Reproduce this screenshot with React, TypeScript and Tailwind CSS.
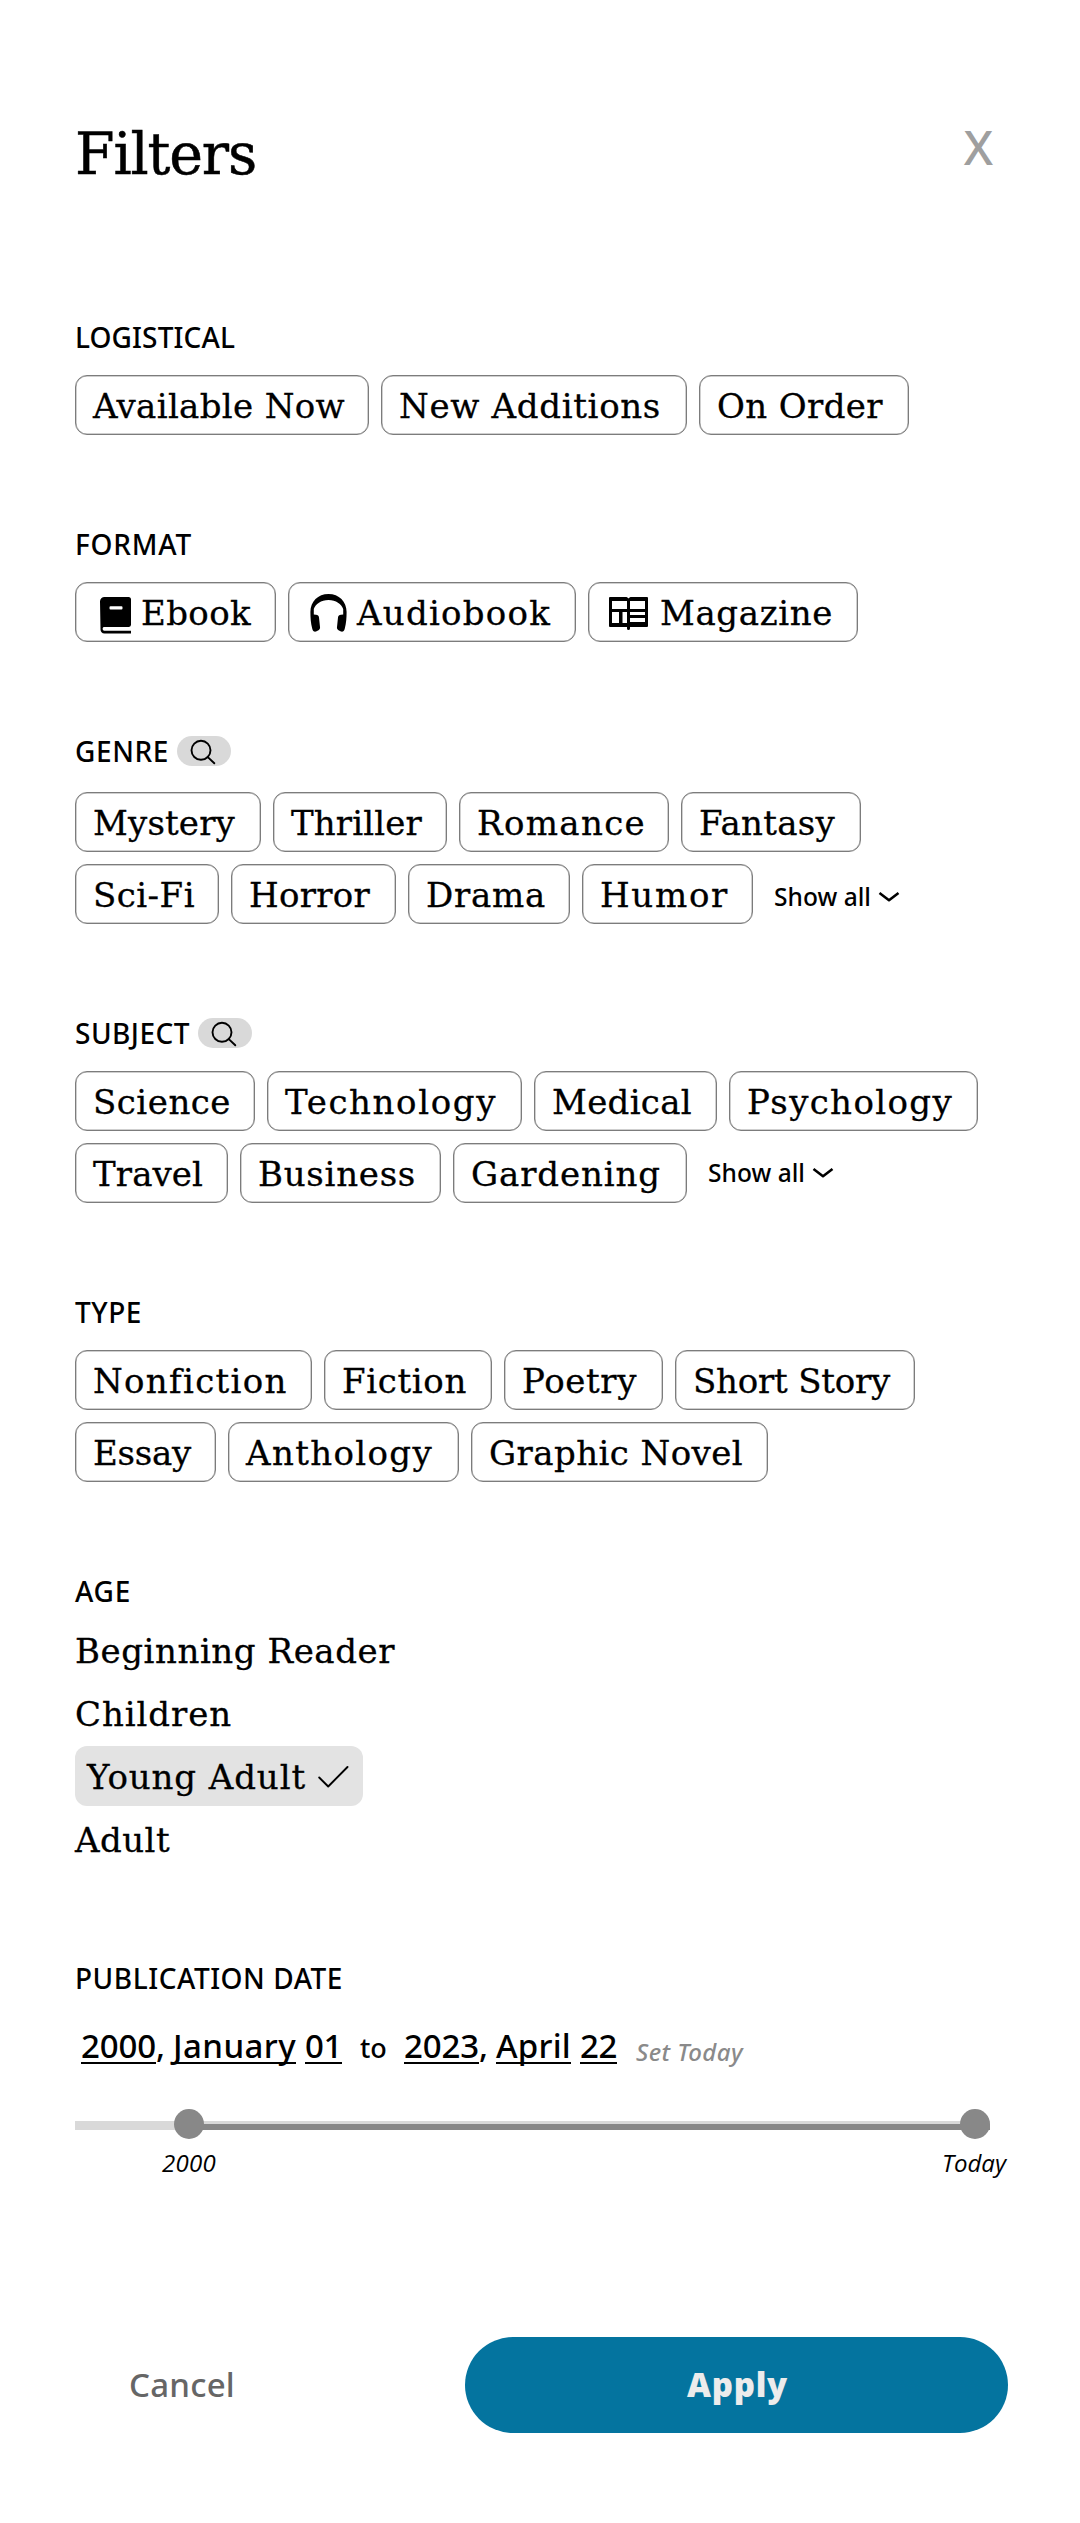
import { useLayoutEffect, useRef } from "react";
import type { ReactNode } from "react";

const SLAB = "font-['DejaVu_Serif',serif] [-webkit-text-stroke:0.3px_black]";

/* Single line of text whose tracking is adjusted so that it spans `width`. */
function Fit({ text, width, className = "" }: { text: string; width: number; className?: string }) {
  const ref = useRef<HTMLSpanElement>(null);
  useLayoutEffect(() => {
    const el = ref.current;
    if (!el) return;
    el.style.letterSpacing = "0px";
    const natural = el.getBoundingClientRect().width;
    const step = (width - natural) / text.length;
    el.style.letterSpacing = `${step}px`;
  }, [text, width]);
  return (
    <span ref={ref} className={`inline-block shrink-0 whitespace-pre ${className}`}>
      {text}
    </span>
  );
}

function Heading({ text, width, children }: { text: string; width: number; children?: ReactNode }) {
  return (
    <div className="flex h-10 items-center">
      <h2 className="text-[28px] leading-10 font-medium">
        <Fit text={text} width={width} />
      </h2>
      {children}
    </div>
  );
}

function SearchPill() {
  return (
    <button className="ml-2 h-[30px] w-[54px] rounded-full bg-[#d9d9d9]" aria-label="Search">
      <svg width="54" height="30" viewBox="0 0 54 30" fill="none" stroke="#000" strokeWidth="1.9" strokeLinecap="round">
        <circle cx="24" cy="14.3" r="9.5" />
        <path d="M30.8 21.1L37.3 27.3" />
      </svg>
    </button>
  );
}

type ChipData = { text: string; box: number; width: number; icon?: ReactNode };

function Chip({ text, box, width, icon }: ChipData) {
  return (
    <button
      className="flex h-[60px] shrink-0 items-center rounded-xl border border-[#7c7c7c] pl-[17px] text-[34px] shadow-[inset_0_0_0_0.5px_#a0a0a0]"
      style={{ width: box }}
    >
      {icon}
      <Fit text={text} width={width} className={`${SLAB} pt-0.5 leading-[56px]`} />
    </button>
  );
}

function Chips({ rows, more }: { rows: ChipData[][]; more?: ReactNode }) {
  return (
    <div className="flex flex-col gap-3">
      {rows.map((row, i) => (
        <div key={i} className="flex gap-3">
          {row.map((c) => (
            <Chip key={c.text} {...c} />
          ))}
          {i === rows.length - 1 && more}
        </div>
      ))}
    </div>
  );
}

function ShowAll({ className = "" }: { className?: string }) {
  return (
    <button className={`ml-[9px] flex h-[60px] items-center text-[24.5px] font-medium ${className}`}>
      <Fit text="Show all" width={97} className="leading-8" />
      <svg className="ml-[7px]" width="22" height="12" viewBox="0 0 22 12" fill="none" stroke="#000" strokeWidth="2.6" strokeLinejoin="round">
        <path d="M1.5 2L11 9.2L20.5 2" />
      </svg>
    </button>
  );
}

const BookIcon = (
  <svg className="mt-[7px] mr-[10px] ml-[7px]" width="31" height="37" viewBox="0 0 31 37">
    <path
      fillRule="evenodd"
      d="M4.5 0H28.5A2.5 2.5 0 0 1 31 2.5V27.5A2.5 2.5 0 0 1 29 30H3.8C2.2 30.5 2.2 33.6 4.2 33.8H31V36.5H4.5C2 36.5 .5 34.8 .5 32.5L0 4.5A4.5 4.5 0 0 1 4.5 0ZM10.5 9.2A1 1 0 0 0 9.5 10.2V11.5A1 1 0 0 0 10.5 12.5H21.5A1 1 0 0 0 22.5 11.5V10.2A1 1 0 0 0 21.5 9.2Z"
    />
  </svg>
);

const HeadphonesIcon = (
  <svg className="mt-[2px] mr-[10px] ml-1" width="37" height="38" viewBox="0 0 37 38">
    <path d="M18.5 0C29 0 36.6 7.5 36.6 18C36.6 24 36.2 29 34.8 34.5C34.2 37.2 32.8 38 31 37.6L28.5 36.2C27.2 35.4 26.8 34.3 27 33L28 23.5C28.2 21.8 29.3 20.8 31 20.8L33.2 20.4V15C31.5 10 26 6 18.5 6S5.5 10 3.8 15V20.4L6 20.8C7.7 20.8 8.8 21.8 9 23.5L10 33C10.2 34.3 9.8 35.4 8.5 36.2L6 37.6C4.2 38 2.8 37.2 2.2 34.5C.8 29 .4 24 .4 18C.4 7.5 8 0 18.5 0Z" />
  </svg>
);

const MagazineIcon = (
  <svg className="mt-[3px] mr-3 ml-[3px]" width="39" height="33" viewBox="0 0 39 33">
    <path
      fillRule="evenodd"
      d="M1 0H16.5C18 0 19 .7 19.5 1.5C20 .7 21 0 22.5 0H38A1 1 0 0 1 39 1V29A1 1 0 0 1 38 30H21V31.5A1.5 1.5 0 0 1 18 31.5V30H1A1 1 0 0 1 0 29V1A1 1 0 0 1 1 0ZM3 4V12H18V4ZM21 4V12H36V4ZM3 15V26H10V15ZM13.5 15V26H18V15ZM21 15V18H36V15ZM21 21V25H36V21Z"
    />
  </svg>
);

export default function App() {
  return (
    <main className="flex min-h-[2523px] w-[1080px] flex-col bg-white pr-[72px] pl-[75px] font-['Noto_Sans',sans-serif] text-black">
      <header className="flex h-[317px] justify-between pt-[118px] pr-[15px]">
        <h1 className="font-['DejaVu_Serif',serif] text-[57px] leading-[72px] [-webkit-text-stroke:0.5px_black]">
          <Fit text="Filters" width={181} />
        </h1>
        <button className="-mt-px h-[60px] text-[48px] leading-[60px] font-medium text-[#9f9f9f]">X</button>
      </header>

      <div className="flex flex-col gap-[89px]">
        <section className="flex flex-col gap-[18px]">
          <Heading text="LOGISTICAL" width={160} />
          <Chips
            rows={[
              [
                { text: "Available Now", box: 294, width: 252 },
                { text: "New Additions", box: 306, width: 262 },
                { text: "On Order", box: 210, width: 166 },
              ],
            ]}
          />
        </section>

        <section className="flex flex-col gap-[18px]">
          <Heading text="FORMAT" width={117} />
          <Chips
            rows={[
              [
                { text: "Ebook", box: 201, width: 110, icon: BookIcon },
                { text: "Audiobook", box: 288, width: 194, icon: HeadphonesIcon },
                { text: "Magazine", box: 270, width: 173, icon: MagazineIcon },
              ],
            ]}
          />
        </section>

        <section className="flex flex-col gap-[21px]">
          <Heading text="GENRE" width={94}>
            <SearchPill />
          </Heading>
          <Chips
            rows={[
              [
                { text: "Mystery", box: 186, width: 142 },
                { text: "Thriller", box: 174, width: 131 },
                { text: "Romance", box: 210, width: 169 },
                { text: "Fantasy", box: 180, width: 136 },
              ],
              [
                { text: "Sci-Fi", box: 144, width: 102 },
                { text: "Horror", box: 165, width: 121 },
                { text: "Drama", box: 162, width: 120 },
                { text: "Humor", box: 171, width: 129 },
              ],
            ]}
            more={<ShowAll className="pt-1.5" />}
          />
        </section>

        <section className="flex flex-col gap-[18px]">
          <Heading text="SUBJECT" width={115}>
            <SearchPill />
          </Heading>
          <Chips
            rows={[
              [
                { text: "Science", box: 180, width: 138 },
                { text: "Technology", box: 255, width: 212 },
                { text: "Medical", box: 183, width: 140 },
                { text: "Psychology", box: 249, width: 206 },
              ],
              [
                { text: "Travel", box: 153, width: 110 },
                { text: "Business", box: 201, width: 158 },
                { text: "Gardening", box: 234, width: 190 },
              ],
            ]}
            more={<ShowAll />}
          />
        </section>

        <section className="flex flex-col gap-[18px]">
          <Heading text="TYPE" width={67} />
          <Chips
            rows={[
              [
                { text: "Nonfiction", box: 237, width: 194 },
                { text: "Fiction", box: 168, width: 125 },
                { text: "Poetry", box: 159, width: 115 },
                { text: "Short Story", box: 240, width: 197 },
              ],
              [
                { text: "Essay", box: 141, width: 98 },
                { text: "Anthology", box: 231, width: 187 },
                { text: "Graphic Novel", box: 297, width: 254 },
              ],
            ]}
          />
        </section>

        <section className="flex flex-col gap-[9px]">
          <Heading text="AGE" width={56} />
          <ul className={`flex flex-col items-start gap-[3px] text-[34px] leading-[60px] ${SLAB}`}>
            <li className="h-[60px] pt-px">
              <Fit text="Beginning Reader" width={320} />
            </li>
            <li className="h-[60px] pt-px">
              <Fit text="Children" width={157} />
            </li>
            <li className="flex h-[60px] w-[288px] items-center rounded-xl bg-[#e3e3e3] pt-px pl-3">
              <Fit text="Young Adult" width={219} />
              <svg className="ml-3" width="31" height="24" viewBox="0 0 31 24" fill="none" stroke="#000" strokeWidth="1.9" strokeLinecap="round" strokeLinejoin="round">
                <path d="M1.2 12.5L10.2 21.5L29.5 2" />
              </svg>
            </li>
            <li className="h-[60px] pt-px">
              <Fit text="Adult" width={95} />
            </li>
          </ul>
        </section>

        <section className="flex flex-col">
          <Heading text="PUBLICATION DATE" width={268} />
          <div className="mt-[24px] flex h-12 items-baseline pl-1.5 text-[33px] leading-[48px] font-medium">
            <DatePart text="2000" width={75} />
            <span className="w-[17px]">,</span>
            <DatePart text="January" width={123} />
            <DatePart text="01" width={37} className="ml-[9px]" />
            <span className="ml-[18px] w-[44px] text-[27px]">to</span>
            <DatePart text="2023" width={75} />
            <span className="w-[17px]">,</span>
            <DatePart text="April" width={75} />
            <DatePart text="22" width={37} className="ml-[9px]" />
            <span className="relative top-[3px] ml-[19px] text-[24px] text-[#8a8a8a] italic">
              <Fit text="Set Today" width={107} />
            </span>
          </div>
          <div className="relative mt-[39px] h-[30px] w-[915px]">
            <div className="absolute top-3 left-0 h-[9px] w-full bg-[#d9d9d9]" />
            <div className="absolute top-[15px] right-0 left-[114px] h-1.5 bg-[#888888]" />
            <div className="absolute top-0 left-[99px] size-[30px] rounded-full bg-[#888888]" />
            <div className="absolute top-0 right-0 size-[30px] rounded-full bg-[#888888]" />
          </div>
          <div className="mt-2 flex justify-between pr-0.5 pl-[87px] font-['Open_Sans','Noto_Sans',sans-serif] text-[24px] leading-8 italic">
            <Fit text="2000" width={54} />
            <Fit text="Today" width={64} />
          </div>
        </section>
      </div>

      <footer className="mt-[158px] flex h-24 items-center justify-between">
        <button className="ml-[54px] text-[33px] font-medium text-[#666666]">
          <Fit text="Cancel" width={106} />
        </button>
        <button className="h-24 w-[543px] rounded-full bg-[#04749f] pl-0.5 font-['Open_Sans','Noto_Sans',sans-serif] text-[33px] font-extrabold text-[#ececec]">
          <Fit text="Apply" width={101} />
        </button>
      </footer>
    </main>
  );
}

function DatePart({ text, width, className = "" }: { text: string; width: number; className?: string }) {
  return (
    <Fit
      text={text}
      width={width}
      className={`underline decoration-2 underline-offset-[4px] [text-decoration-skip-ink:none] ${className}`}
    />
  );
}
